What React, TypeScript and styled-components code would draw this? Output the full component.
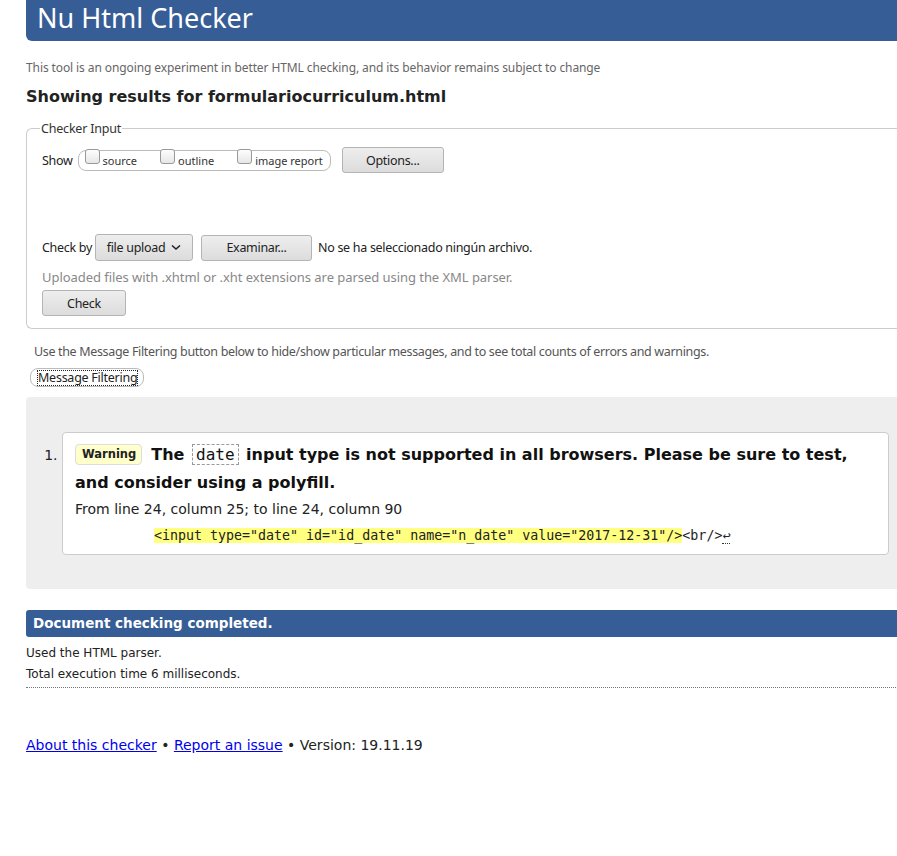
import React from "react";
import styled, { createGlobalStyle } from "styled-components";

const Global = createGlobalStyle`
  html, body { margin: 0; padding: 0; background: #fff; overflow: hidden; }
  body { font-family: "DejaVu Sans", sans-serif; color: #222; }
`;

const Page = styled.div`
  width: 900px;
  padding-left: 26px;
  box-sizing: border-box;
  display: flex;
  flex-direction: column;
`;

const Header = styled.h1`
  margin: 0;
  height: 41px;
  background: #365d95;
  border-bottom-left-radius: 6px;
  color: #fff;
  font-family: "Noto Sans", sans-serif;
  font-weight: 400;
  font-size: 27px;
  line-height: 36px;
  padding-left: 11px;
`;

const Intro = styled.p`
  margin: 19px 0 0;
  font-family: "Noto Sans", sans-serif;
  font-size: 12px;
  color: #666;
  line-height: 16px;
  letter-spacing: -0.1px;
`;

const Title = styled.h2`
  margin: 10px 0 0;
  font-size: 16px;
  font-weight: 700;
  line-height: 22px;
  color: #222;
`;

const Fieldset = styled.fieldset`
  margin: 12px 0 0;
  padding: 8px 15px 10px;
  border: 1px solid #ccc;
  border-right: none;
  border-top-left-radius: 6px;
  border-bottom-left-radius: 6px;
  height: 209px;
  box-sizing: border-box;
  display: flex;
  flex-direction: column;
  font-family: "Noto Sans", sans-serif;
`;

const Legend = styled.legend`
  font-size: 12.5px;
  color: #333;
  padding: 0 1px;
  margin-left: -2px;
  letter-spacing: -0.2px;
`;

const Row = styled.div<{ $mt?: number }>`
  display: flex;
  align-items: center;
  margin-top: ${(p) => p.$mt ?? 0}px;
  font-size: 12.5px;
  letter-spacing: -0.3px;
  color: #222;
`;

const Pill = styled.div`
  display: flex;
  align-items: center;
  height: 21px;
  box-sizing: border-box;
  border: 1px solid #bbb;
  border-radius: 8px;
  padding: 0 7px 0 6px;
  margin-left: 5px;
  gap: 23px;
`;

const CheckItem = styled.label`
  display: flex;
  align-items: center;
  font-size: 11px;
  letter-spacing: 0;
  color: #333;
`;

const Box = styled.span`
  width: 15px;
  height: 15px;
  border: 1px solid #999;
  border-radius: 3px;
  background: linear-gradient(#fdfdfd, #e7e7e7);
  box-sizing: border-box;
  margin-right: 3px;
  margin-top: -7px;
`;

const Button = styled.span<{ $w: number; $h?: number; $ml?: number }>`
  display: inline-flex;
  align-items: center;
  justify-content: center;
  width: ${(p) => p.$w}px;
  height: ${(p) => p.$h ?? 26}px;
  margin-left: ${(p) => p.$ml ?? 0}px;
  box-sizing: border-box;
  border: 1px solid #b4b4b4;
  border-radius: 3px;
  background: linear-gradient(#eeeeee, #dcdcdc);
  font-size: 12.5px;
  color: #222;
  letter-spacing: -0.3px;
  gap: 6px;
`;

const NoFile = styled.span`
  margin-left: 6px;
`;

const Hint = styled.div`
  margin-top: 7px;
  font-size: 13px;
  color: #888;
  letter-spacing: -0.05px;
`;

const FilterNote = styled.p`
  margin: 14px 0 0 8px;
  font-family: "Noto Sans", sans-serif;
  font-size: 12.5px;
  color: #555;
  letter-spacing: -0.34px;
`;

const FilterButton = styled.span`
  align-self: flex-start;
  margin: 8px 0 0 4px;
  padding: 0 6px 0 7px;
  height: 19px;
  box-sizing: border-box;
  border: 1px solid #bbb;
  border-radius: 8px;
  font-family: "Noto Sans", sans-serif;
  font-size: 12.5px;
  letter-spacing: -0.25px;
  color: #222;
  display: flex;
  align-items: center;
`;

const Focus = styled.span`
  outline: 1px dotted #222;
  line-height: 14px;
`;

const Results = styled.div`
  margin-top: 10px;
  background: #eee;
  border-radius: 4px 0 0 4px;
  padding: 35px 11px 34px 0;
`;

const List = styled.ol`
  margin: 0;
  padding-left: 36px;
  font-size: 14px;
`;

const Item = styled.li`
  border: 1px solid #ccc;
  border-radius: 4px;
  background: #fff;
  padding: 8px 12px 9px;
  &::marker { font-size: 14px; }
`;

const Message = styled.p`
  margin: 0;
  font-weight: 700;
  font-size: 16px;
  line-height: 28px;
  color: #111;
`;

const Badge = styled.strong`
  display: inline-block;
  font-size: 11.5px;
  line-height: 19px;
  padding: 0 5px 0 6px;
  margin-right: 9px;
  background: #ffffcc;
  border: 1px solid #ddd;
  border-radius: 4px;
  vertical-align: 2px;
  color: #222;
`;

const InlineCode = styled.code`
  font-family: "DejaVu Sans Mono", monospace;
  font-weight: 400;
  font-size: 16px;
  border: 1px dashed #999;
  padding: 0 3px;
  margin: 0 2px;
`;

const Location = styled.p`
  margin: 3px 0 0;
  font-size: 14px;
  line-height: 18px;
  color: #222;
`;

const Extract = styled.p`
  margin: 9px 0 0 79px;
  font-family: "DejaVu Sans Mono", monospace;
  font-size: 13.3px;
  line-height: 18px;
  color: #222;
  white-space: pre;
`;

const Mark = styled.mark`
  background: #ffff80;
  color: #222;
`;

const Lf = styled.span`
  border-bottom: 1px dotted #333;
`;

const DoneBar = styled.h2`
  margin: 21px 0 0;
  height: 27px;
  background: #365d95;
  border-bottom-left-radius: 3px;
  border-top-left-radius: 3px;
  color: #fff;
  font-size: 13.5px;
  font-weight: 700;
  line-height: 27px;
  padding-left: 7px;
`;

const Stats = styled.div`
  margin-top: 6px;
  padding-bottom: 2px;
  border-bottom: 1px dotted #777;
  font-size: 12px;
  line-height: 21px;
  color: #222;
`;

const Footer = styled.p`
  margin: 49px 0 0;
  font-size: 14px;
  color: #222;
`;

const Link = styled.a`
  color: #0000ee;
  text-decoration: underline;
`;

const Chevron = () => (
  <svg width="10" height="7" viewBox="0 0 10 7">
    <path d="M1 1.5 L5 5 L9 1.5" fill="none" stroke="#222" strokeWidth="1.6" />
  </svg>
);

export default function App() {
  return (
    <>
      <Global />
      <Page>
        <Header>Nu Html Checker</Header>
        <Intro>
          This tool is an ongoing experiment in better HTML checking, and its behavior remains subject to change
        </Intro>
        <Title>Showing results for formulariocurriculum.html</Title>
        <Fieldset>
          <Legend>Checker Input</Legend>
          <Row $mt={2}>
            Show
            <Pill>
              <CheckItem><Box />source</CheckItem>
              <CheckItem><Box />outline</CheckItem>
              <CheckItem><Box />image report</CheckItem>
            </Pill>
            <Button $w={102} $ml={11}>Options...</Button>
          </Row>
          <Row $mt={61}>
            Check by
            <Button $w={98} $h={27} $ml={3}>file upload <Chevron /></Button>
            <Button $w={111} $ml={8}>Examinar...</Button>
            <NoFile>No se ha seleccionado ningún archivo.</NoFile>
          </Row>
          <Hint>Uploaded files with .xhtml or .xht extensions are parsed using the XML parser.</Hint>
          <Row $mt={4}>
            <Button $w={84}>Check</Button>
          </Row>
        </Fieldset>
        <FilterNote>
          Use the Message Filtering button below to hide/show particular messages, and to see total counts of errors and warnings.
        </FilterNote>
        <FilterButton><Focus>Message Filtering</Focus></FilterButton>
        <Results>
          <List>
            <Item>
              <Message>
                <Badge>Warning</Badge>The <InlineCode>date</InlineCode> input type is not supported in all browsers. Please be sure to test, and consider using a polyfill.
              </Message>
              <Location>From line 24, column 25; to line 24, column 90</Location>
              <Extract>
                <Mark>{'<input type="date" id="id_date" name="n_date" value="2017-12-31"/>'}</Mark>
                {'<br/>'}<Lf>↩</Lf>
              </Extract>
            </Item>
          </List>
        </Results>
        <DoneBar>Document checking completed.</DoneBar>
        <Stats>
          <div>Used the HTML parser.</div>
          <div>Total execution time 6 milliseconds.</div>
        </Stats>
        <Footer>
          <Link href="#">About this checker</Link> • <Link href="#">Report an issue</Link> • Version: 19.11.19
        </Footer>
      </Page>
    </>
  );
}
